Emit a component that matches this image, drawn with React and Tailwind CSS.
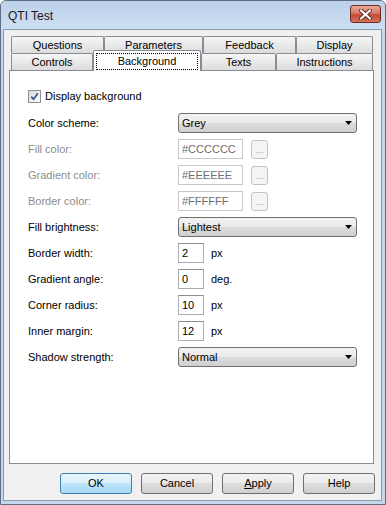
import React from 'react';

const font = "font-['Liberation_Sans',Arial,sans-serif]";

const topTabs = [
  { label: 'Questions', cls: 'w-[93px]' },
  { label: 'Parameters', cls: 'w-[99px]' },
  { label: 'Feedback', cls: 'w-[93px]' },
  { label: 'Display', cls: 'w-[77px]' },
];

function Tab({ label, cls }) {
  return (
    <div
      className={`${cls} h-full flex items-center justify-center border-t border-l border-r border-[#898c95] rounded-t-[2px] bg-gradient-to-b from-[#f6f6f6] to-[#dcdcdc] text-[11px] text-black`}
    >
      {label}
    </div>
  );
}

function Arrow() {
  return (
    <svg width="7" height="4" viewBox="0 0 7 4">
      <polygon points="0,0 7,0 3.5,4" fill="#000" />
    </svg>
  );
}

function Select({ value }) {
  return (
    <div className="w-[179px] h-[20px] flex items-center justify-between pl-[3px] pr-[4px] border border-[#707070] rounded-[3px] bg-[linear-gradient(#f2f2f2,#ebebeb_50%,#dddddd_50%,#cfcfcf)] text-[11px] text-black">
      <span>{value}</span>
      <Arrow />
    </div>
  );
}

function ColorField({ value }) {
  return (
    <div className="flex items-center">
      <div className="w-[65px] h-[20px] flex items-center pl-[3px] border border-[#c8c8c8] bg-white text-[11px] text-[#6d6d6d]">
        {value}
      </div>
      <div className="ml-[8px] w-[17px] h-[19px] flex items-end justify-center pb-[3px] border border-[#c2c2c2] rounded-[3px] bg-[#f4f4f4] text-[9px] leading-none text-[#9a9a9a]">
        ...
      </div>
    </div>
  );
}

function NumField({ value, unit }) {
  return (
    <div className="flex items-center">
      <div className="w-[26px] h-[20px] flex items-center pl-[3px] border border-[#abadb3] border-t-[#8e8f8f] bg-white text-[11px] text-black">
        {value}
      </div>
      <span className="ml-[7px] text-[11px] text-black">{unit}</span>
    </div>
  );
}

function Label({ children, disabled }) {
  return (
    <div className={`h-[20px] flex items-center text-[11px] ${disabled ? 'text-[#8d8d8d]' : 'text-black'}`}>
      {children}
    </div>
  );
}

function Button({ children, primary }) {
  return (
    <div
      className={
        primary
          ? 'w-[72px] h-[21px] flex items-center justify-center border border-[#3c7fb1] rounded-[3px] bg-[linear-gradient(#eaf6fd,#d9f0fc_50%,#bee6fd_50%,#a7d9f5)] text-[11px] text-black'
          : 'w-[72px] h-[21px] flex items-center justify-center border border-[#707070] rounded-[3px] bg-[linear-gradient(#f2f2f2,#ebebeb_50%,#dddddd_50%,#cfcfcf)] text-[11px] text-black'
      }
    >
      {children}
    </div>
  );
}

export default function App() {
  return (
    <div className={`${font} w-[386px] h-[505px] flex flex-col border border-[#5d6d83] rounded-t-[6px] bg-[#c4d7ed] overflow-hidden`}>
      {/* title bar */}
      <div className="h-[28px] flex items-start justify-between pl-[7px] pr-[4px] bg-gradient-to-b from-[#bcd1ea] to-[#cddff2]">
        <span className="mt-[6px] text-[12px] text-[#1a1a1a]">QTI Test</span>
        <div className="mt-[4px] w-[31px] h-[18px] flex items-center justify-center border border-[#6e2a22] rounded-[3px] bg-[linear-gradient(#e9a99b,#d67a68_45%,#c24a34_55%,#d2735c)]">
          <svg width="13" height="11" viewBox="0 0 13 11">
            <path d="M2 1.5 L11 9.5 M11 1.5 L2 9.5" stroke="#5a2a22" strokeWidth="4" strokeLinecap="round" />
            <path d="M2 1.5 L11 9.5 M11 1.5 L2 9.5" stroke="#fff" strokeWidth="2.2" strokeLinecap="round" />
          </svg>
        </div>
      </div>

      {/* client area */}
      <div className="flex-1 ml-[2px] mr-[3px] mb-[3px] border border-[#8a9bb0] bg-[#f0f0f0] flex flex-col pt-[6px]">
        {/* tab strip */}
        <div className="ml-[7px] flex h-[17px]">
          {topTabs.map((t) => (
            <Tab key={t.label} {...t} />
          ))}
        </div>
        <div className="ml-[7px] flex items-end h-[17px]">
          <Tab label="Controls" cls="w-[82px]" />
          <div className="relative top-[1px] z-10 w-[108px] h-[21px] p-[2px] pb-[1px] border-t border-l border-r border-[#898c95] rounded-t-[2px] bg-white">
            <div className="w-full h-full flex items-center justify-center border border-dotted border-black text-[11px] text-black pb-[1px]">
              Background
            </div>
          </div>
          <Tab label="Texts" cls="w-[75px]" />
          <Tab label="Instructions" cls="w-[97px]" />
        </div>

        {/* panel */}
        <div className="ml-[5px] mr-[7px] h-[394px] border border-[#898c95] bg-white pl-[18px] pt-[18px]">
          <div className="h-[14px] flex items-center">
            <div className="w-[13px] h-[13px] border border-[#8e8f8f] bg-gradient-to-br from-[#dcdcdc] to-[#fbfbfb] p-[1px] flex items-center justify-center">
              <svg width="9" height="9" viewBox="0 0 9 9">
                <path d="M1.2 4.6 L3.6 7.2 L7.8 1.3" stroke="#3a5795" strokeWidth="1.8" fill="none" />
              </svg>
            </div>
            <span className="ml-[4px] text-[11px] text-black">Display background</span>
          </div>

          <div className="mt-[10px] grid grid-cols-[150px_auto] gap-y-[6px] items-center">
            <Label>Color scheme:</Label>
            <Select value="Grey" />

            <Label disabled>Fill color:</Label>
            <ColorField value="#CCCCCC" />

            <Label disabled>Gradient color:</Label>
            <ColorField value="#EEEEEE" />

            <Label disabled>Border color:</Label>
            <ColorField value="#FFFFFF" />

            <Label>Fill brightness:</Label>
            <Select value="Lightest" />

            <Label>Border width:</Label>
            <NumField value="2" unit="px" />

            <Label>Gradient angle:</Label>
            <NumField value="0" unit="deg." />

            <Label>Corner radius:</Label>
            <NumField value="10" unit="px" />

            <Label>Inner margin:</Label>
            <NumField value="12" unit="px" />

            <Label>Shadow strength:</Label>
            <Select value="Normal" />
          </div>
        </div>

        {/* buttons */}
        <div className="mt-[9px] mr-[6px] flex justify-end gap-[9px]">
          <Button primary>OK</Button>
          <Button>Cancel</Button>
          <Button>
            <span className="underline">A</span>pply
          </Button>
          <Button>Help</Button>
        </div>
      </div>
    </div>
  );
}
